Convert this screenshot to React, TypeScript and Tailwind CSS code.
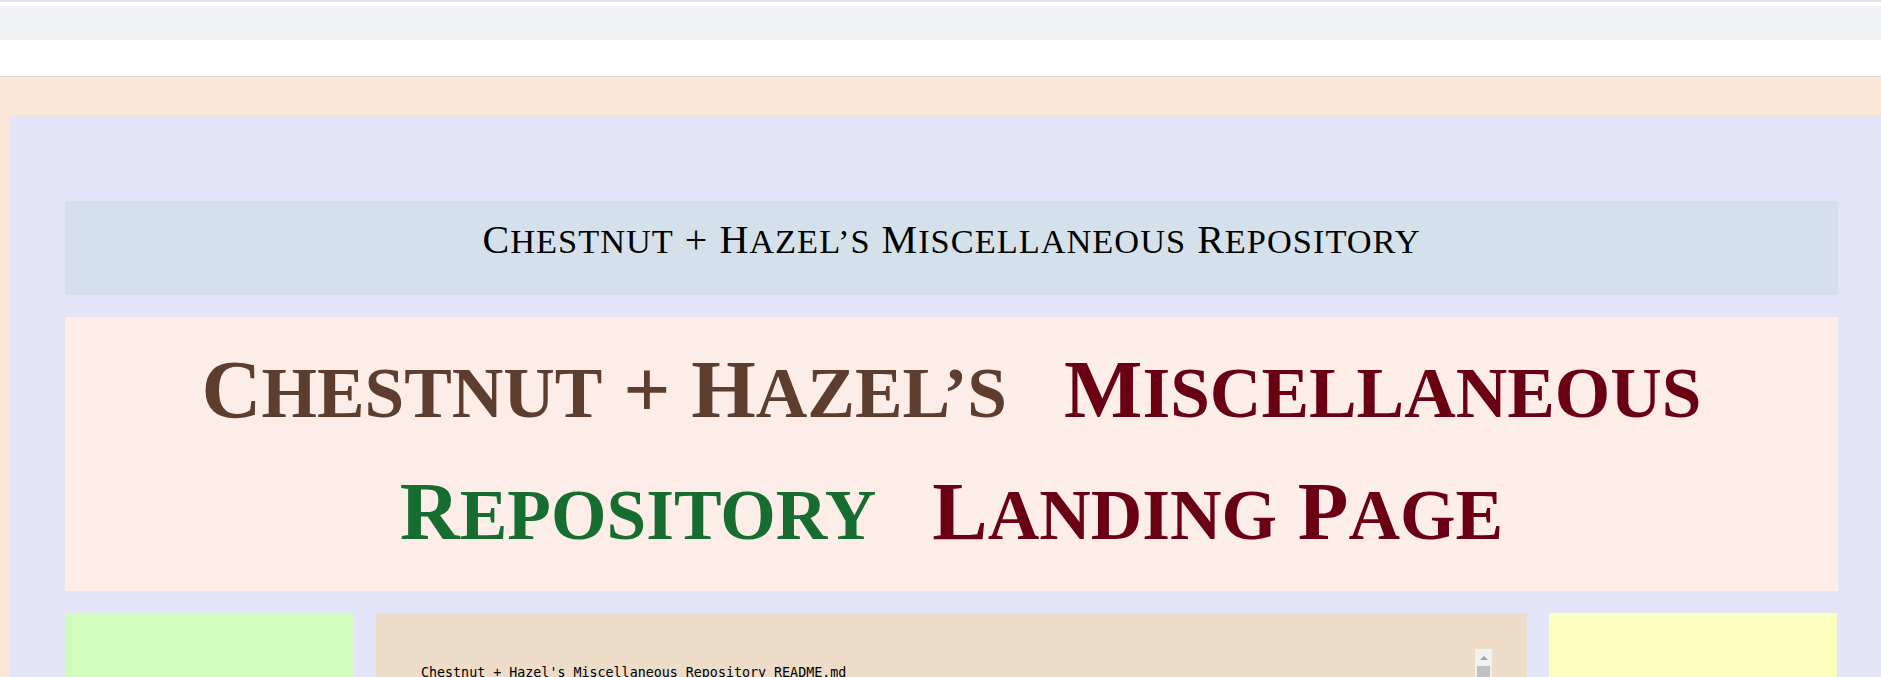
import React from 'react';

// hand-rolled small caps: initial letter full size, the rest in capitals at 0.86em
const SmallCaps: React.FC<{ text: string }> = ({ text }) => {
    const words = text.split(' ');
    return (
        <>
            {words.map((w, i) => (
                <React.Fragment key={i}>
                    {i > 0 && ' '}
                    <span>
                        {w[0]}
                        <span className="text-[0.86em]">{w.slice(1).toUpperCase()}</span>
                    </span>
                </React.Fragment>
            ))}
        </>
    );
};

const App: React.FC = () => {
    return (
        <div className="w-[1881px] h-[677px] overflow-hidden bg-white flex flex-col">
            {/* browser chrome strip */}
            <div className="h-[2px] shrink-0 bg-[#dee1e6]"></div>
            <div className="h-[4px] shrink-0 bg-white"></div>
            <div className="h-[34px] shrink-0 bg-[#f1f2f4]"></div>
            <div className="h-[37px] shrink-0 bg-white border-b border-[#d9d9d9]"></div>

            <div className="flex-1 min-h-0 overflow-hidden bg-[#fae7d5] pt-[38px] pl-[9px]">
                <div className="h-[700px] bg-[#e4e4f9] pt-[86px] pl-[56px] pr-[43px] flex flex-col gap-[22px]">
                    <header className="h-[94px] shrink-0 bg-[#d4e1ea] pt-[19px] text-center">
                        <h2 className="font-['Liberation_Serif',serif] text-[40px] leading-[40px] text-black tracking-[1px]">
                            <SmallCaps text="Chestnut + Hazel’s Miscellaneous Repository" />
                        </h2>
                    </header>

                    <section className="h-[274px] shrink-0 bg-[#fdede9] pt-[13px]">
                        <h1 className="font-['Liberation_Serif',serif] font-bold text-[83px] leading-[119px]">
                            <div className="flex justify-center gap-x-[57px]">
                                <span className="text-[#5c3d2e]"><SmallCaps text="Chestnut + Hazel’s" /></span>
                                <span className="text-[#6a0014]"><SmallCaps text="Miscellaneous" /></span>
                            </div>
                            <div className="flex justify-center gap-x-[56px]">
                                <span className="text-[#176d30]"><SmallCaps text="Repository" /></span>
                                <span className="text-[#6a0014]"><SmallCaps text="Landing Page" /></span>
                            </div>
                        </h1>
                    </section>

                    <div className="flex gap-[22px] shrink-0 h-[300px]">
                        <aside className="w-[289px] shrink-0 bg-[#d0fcbc]"></aside>
                        <main className="w-[1151px] shrink-0 bg-[#ecdcc8] pt-[36px] pl-[42px] pr-[35px]">
                            <div className="relative h-[240px] pl-[3px] pt-[16px] font-['DejaVu_Sans_Mono',monospace] text-[13.33px] leading-[16px] text-black">
                                <p>Chestnut + Hazel's Miscellaneous Repository README.md</p>
                                <div className="absolute right-0 top-0 w-[17px] h-full bg-[#f1f1f1] flex flex-col items-center">
                                    <div className="mt-[7px] w-0 h-0 border-l-[4px] border-r-[4px] border-b-[4px] border-l-transparent border-r-transparent border-b-[#a3a3a3]"></div>
                                    <div className="mt-[6px] w-[13px] h-[80px] bg-[#c1c1c1]"></div>
                                </div>
                            </div>
                        </main>
                        <aside className="w-[288px] shrink-0 bg-[#fefdc0]"></aside>
                    </div>
                </div>
            </div>
        </div>
    );
};

export default App;
